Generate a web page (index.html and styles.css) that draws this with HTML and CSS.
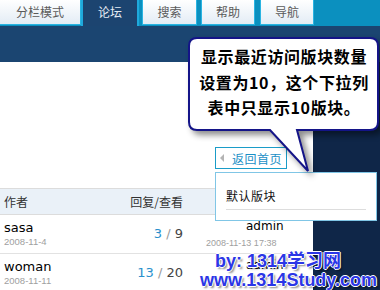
FILE: index.html
```html
<!DOCTYPE html>
<html>
<head>
<meta charset="utf-8">
<link rel="stylesheet" href="styles.css">
</head>
<body>
<div class="page">
  <div class="tabs">
    <div class="tab first">分栏模式</div>
    <div class="tab active">论坛</div>
    <div class="tab">搜索</div>
    <div class="tab">帮助</div>
    <div class="tab">导航</div>
  </div>
  <div class="band"></div>
  <div class="main">
    <div class="content">
      <div class="backrow">
        <div class="back"><span class="tri"></span><span>返回首页</span></div>
      </div>
      <div class="thead">
        <div class="c1">作者</div>
        <div class="c2">回复/查看</div>
        <div class="c3"></div>
      </div>
      <div class="row">
        <div class="c1"><div class="name">sasa</div><div class="date">2008-11-4</div></div>
        <div class="c2 nums"><span class="rep">3</span> <span class="sl">/</span> <span class="view">9</span></div>
        <div class="c3"><div class="last">admin</div><div class="ldate">2008-11-13 17:38</div></div>
      </div>
      <div class="row">
        <div class="c1"><div class="name">woman</div><div class="date">2008-11-11</div></div>
        <div class="c2 nums"><span class="rep">13</span> <span class="sl">/</span> <span class="view">20</span></div>
        <div class="c3"><div class="last">admin</div></div>
      </div>
    </div>
    <div class="side"></div>
  </div>

  <div class="dropdown">
    <div class="ditem">默认版块</div>
  </div>

  <svg class="bubble" width="215" height="160" viewBox="0 0 215 160">
    <path d="M17,8 H190 Q198,8 198,16 V92 Q198,100 190,100 H117 L128,141 L90,100 H17 Q9,100 9,92 V16 Q9,8 17,8 Z" fill="#ffffff" stroke="#141488" stroke-width="2"/>
  </svg>
  <div class="bubble-text">显示最近访问版块数量<br>设置为10，这个下拉列<br>表中只显示10版块。</div>

  <div class="mark">
    <div class="m1">by: 1314学习网</div>
    <div class="m2">www.1314Study.com</div>
  </div>
</div>
</body>
</html>
```

FILE: styles.css
```css
html, body {
  margin: 0;
  padding: 0;
}
body {
  width: 380px;
  height: 290px;
  overflow: hidden;
  background: #ffffff;
  font-family: "Noto Sans CJK SC", sans-serif;
}
.page {
  position: relative;
  width: 380px;
  height: 290px;
  overflow: hidden;
}
.tabs {
  display: flex;
  height: 26px;
  background: #0b90bf;
  align-items: flex-start;
}
.tab {
  box-sizing: border-box;
  height: 25px;
  width: 54px;
  margin-left: 4px;
  border: 1px solid #2ab4e2;
  border-top: 0;
  background: linear-gradient(#ffffff, #e3ecf5);
  color: #5a5a5a;
  font-size: 12px;
  line-height: 24px;
  text-align: center;
}
.tab.first {
  width: 81px;
  margin-left: 0;
  border-left: 0;
}
.tab.active {
  width: 58px;
  height: 26px;
  margin-left: 0;
  border: 2px solid #1fa9dc;
  border-top: 0;
  border-bottom: 0;
  background: #1c4470;
  color: #e4ecf4;
}
.tab.active + .tab {
  margin-left: 3px;
  width: 55px;
}
.tab:last-child {
  margin-left: 5px;
}
.band {
  height: 36px;
  background: #1b4571;
}
.main {
  display: flex;
  height: 228px;
}
.content {
  width: 313px;
  background: #ffffff;
  padding-top: 85px;
  box-sizing: border-box;
}
.side {
  flex: 1;
  background: #0f2648;
}
.backrow {
  height: 22px;
  margin-bottom: 19px;
  padding-left: 215px;
}
.back {
  box-sizing: border-box;
  width: 72px;
  height: 22px;
  border: 1px solid #1a9cc8;
  display: flex;
  align-items: center;
  padding-left: 4px;
  gap: 8px;
  color: #1a8fc6;
  font-size: 12px;
  letter-spacing: 0.5px;
}
.tri {
  width: 0;
  height: 0;
  border-top: 4px solid transparent;
  border-bottom: 4px solid transparent;
  border-right: 4px solid #b4b4b4;
}
.thead, .row {
  display: grid;
  grid-template-columns: 120px 59px 1fr;
  padding-left: 4px;
}
.thead {
  height: 27px;
  box-sizing: border-box;
  border-top: 1px solid #dcdcdc;
  border-bottom: 1px solid #dcdcdc;
  background: #eaf1f8;
  font-size: 12px;
  line-height: 25px;
  color: #333;
}
.c2 {
  text-align: right;
  white-space: nowrap;
}
.row {
  height: 39px;
  box-sizing: border-box;
  border-bottom: 1px solid #e2e2e2;
}
.row .c1 {
  padding-top: 5px;
}
.name {
  font-family: "DejaVu Sans", sans-serif;
  font-size: 13px;
  line-height: 16px;
  color: #000;
}
.date {
  font-family: "Liberation Sans", sans-serif;
  font-size: 9.5px;
  line-height: 12px;
  color: #a0a0a0;
}
.nums {
  align-self: center;
  font-family: "DejaVu Sans", sans-serif;
  font-size: 13px;
  line-height: 16px;
}
.rep { color: #2a90cc; }
.sl { color: #999; }
.view { color: #444; }
.row .c3 {
  padding-top: 3px;
}
.last {
  padding-left: 63px;
  font-family: "DejaVu Sans", sans-serif;
  font-size: 12px;
  line-height: 16px;
  color: #000;
}
.ldate {
  padding-left: 23px;
  margin-top: 3px;
  font-family: "Liberation Sans", sans-serif;
  font-size: 9px;
  line-height: 12px;
  color: #a0a0a0;
}
.dropdown {
  position: absolute;
  left: 215px;
  top: 172px;
  width: 162px;
  height: 49px;
  box-sizing: border-box;
  border: 1px solid #80c6e6;
  background: #ffffff;
  padding: 10px 10px 0 10px;
}
.ditem {
  font-size: 12px;
  line-height: 26px;
  letter-spacing: 0.5px;
  color: #111;
  border-bottom: 1px solid #dddddd;
}
.bubble {
  position: absolute;
  left: 180px;
  top: 30px;
  filter: drop-shadow(4px 4px 3px rgba(0, 0, 0, 0.45));
}
.bubble-text {
  position: absolute;
  left: 189px;
  top: 38px;
  width: 190px;
  padding-top: 6px;
  text-align: center;
  white-space: nowrap;
  font-size: 16px;
  font-weight: bold;
  line-height: 25.5px;
  letter-spacing: 0.6px;
  color: #000;
}
.mark {
  position: absolute;
  left: 200px;
  top: 252px;
  font-family: "Liberation Sans", "Noto Sans CJK SC", sans-serif;
  font-weight: bold;
  font-size: 18px;
  line-height: 19px;
  color: #2b36e6;
  white-space: nowrap;
  text-shadow: -1px 0 #fff, 1px 0 #fff, 0 -1px #fff, 0 1px #fff, 2px 2px 2px rgba(0, 0, 0, 0.45);
}
.m1 {
  padding-left: 15px;
}
```
